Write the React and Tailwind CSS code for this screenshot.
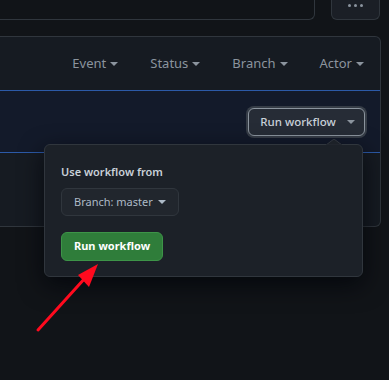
const Caret = ({ className = "" }) => (
  <svg width="8" height="4" viewBox="0 0 8 4" className={className}>
    <path d="M0 0h8L4 4z" fill="currentColor" />
  </svg>
);

const filters = ["Event", "Status", "Branch", "Actor"];

export default function App() {
  return (
    <div
      className="relative min-h-[380px] overflow-hidden bg-[#111418] text-[#c9d1d9]"
      style={{ fontFamily: '"Noto Sans", "Liberation Sans", sans-serif' }}
    >
      {/* top row */}
      <div className="flex h-[20px] gap-[16px] pr-[9px]">
        <div className="flex-1 rounded-br-md border-r border-b border-[#30363d]" />
        <div className="flex w-[49px] items-start justify-center gap-[3px] rounded-b-md border-x border-b border-[#30363d] bg-[#1b1f26] pt-[4px]">
          <span className="h-[3px] w-[3px] rounded-full bg-[#8b949e]" />
          <span className="h-[3px] w-[3px] rounded-full bg-[#8b949e]" />
          <span className="h-[3px] w-[3px] rounded-full bg-[#8b949e]" />
        </div>
      </div>

      {/* runs box */}
      <div className="mt-[16px] w-[381px] rounded-r-md border-y border-r border-[#30363d] bg-[#161b22]">
        <div className="flex h-[53px] items-center justify-end gap-[32px] pr-[16px]">
          {filters.map((f) => (
            <div key={f} className="flex items-center gap-[4px] text-[13px] text-[#8b949e]">
              {f}
              <Caret />
            </div>
          ))}
        </div>
        <div className="flex h-[63px] items-center justify-end border-y border-[#2c5aa8] bg-[#131a2a] pr-[13px]">
          <div className="rounded-[8px] bg-[#363d47] p-[2px]">
            <button className="flex h-[28px] w-[117px] items-center justify-center gap-[11px] rounded-[6px] border border-[#8b949e] bg-[#262c36] pl-[2px] text-[11.5px] font-medium text-[#c9d1d9]">
              Run workflow
              <Caret className="text-[#8b949e]" />
            </button>
          </div>
        </div>
        <div className="h-[73px]" />
      </div>

      {/* popover */}
      <div className="absolute left-[44px] top-[144px] w-[319px] rounded-md border border-[#30363d] bg-[#1c2128] px-[16px] pb-[15px] pt-[17px] shadow-[0_8px_24px_rgba(1,4,9,0.75)]">
        <svg width="16" height="6" viewBox="0 0 16 6" className="absolute right-[20px] top-[-6px]">
          <path d="M0 6L8 0l8 6z" fill="#1c2128" stroke="#30363d" />
          <path d="M0 6.5h16" stroke="#1c2128" strokeWidth="2" />
        </svg>
        <div className="text-[11px] font-semibold leading-[20px] text-[#c9d1d9]">Use workflow from</div>
        <button className="mt-[6px] flex h-[28px] items-center gap-[5px] rounded-md border border-[#30363d] bg-[#21262d] px-[12px] text-[11px] text-[#adbac7]">
          Branch: master
          <Caret />
        </button>
        <button className="mt-[16px] flex h-[29px] items-center rounded-md border border-[#3d9448] bg-[#2f7d3a] px-[12px] text-[11px] font-bold text-white">
          Run workflow
        </button>
      </div>

      {/* red arrow */}
      <svg width="389" height="380" className="pointer-events-none absolute left-0 top-0">
        <path d="M38 330L86 277" stroke="#ff0a1e" strokeWidth="3" strokeLinecap="round" />
        <path d="M98 264L78 275L89 287z" fill="#ff0a1e" />
      </svg>
    </div>
  );
}
